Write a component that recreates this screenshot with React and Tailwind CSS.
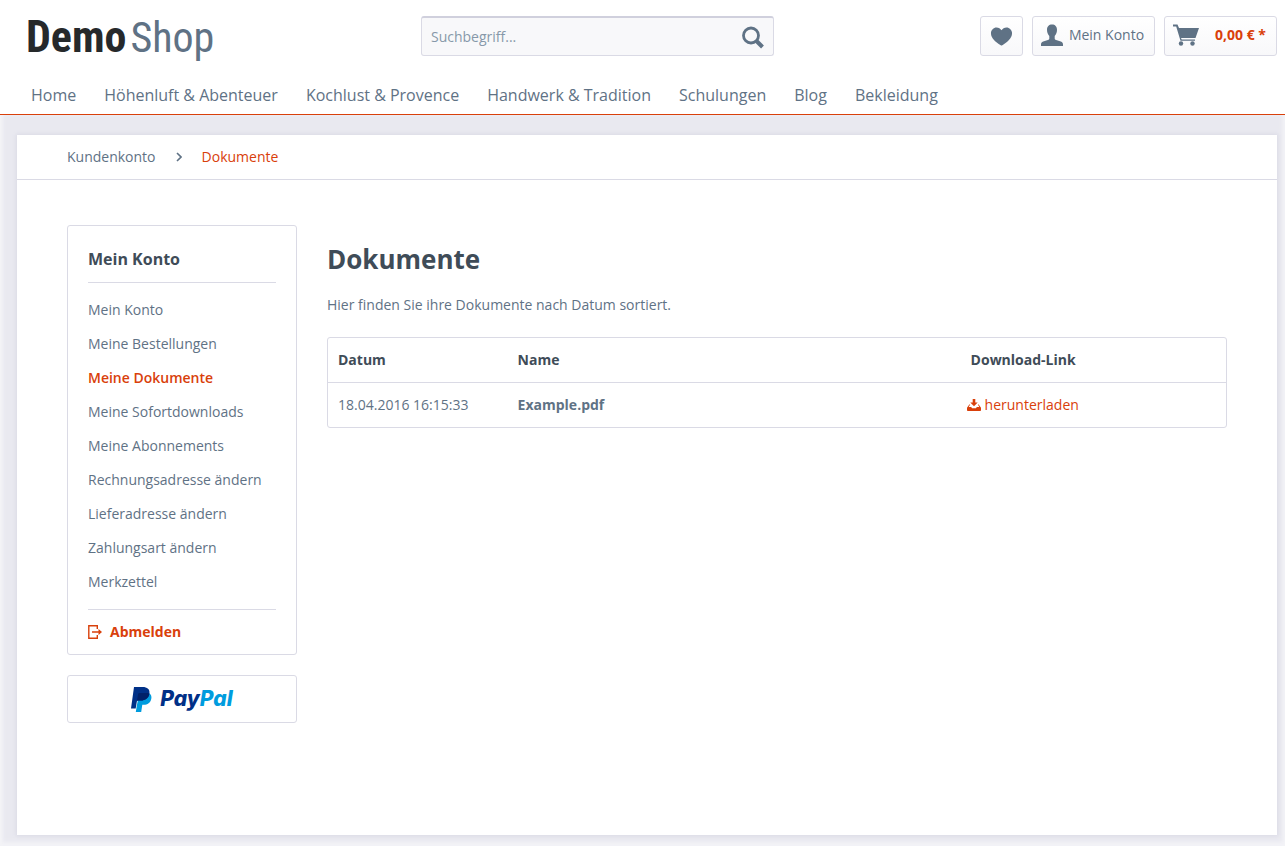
import { GoHeartFill } from "react-icons/go";

const navItems = ["Home", "Höhenluft & Abenteuer", "Kochlust & Provence", "Handwerk & Tradition", "Schulungen", "Blog", "Bekleidung"];

const accountLinks = [
  "Mein Konto",
  "Meine Bestellungen",
  "Meine Dokumente",
  "Meine Sofortdownloads",
  "Meine Abonnements",
  "Rechnungsadresse ändern",
  "Lieferadresse ändern",
  "Zahlungsart ändern",
  "Merkzettel",
];

const documents = [{ date: "18.04.2016 16:15:33", name: "Example.pdf" }];

function SearchIcon() {
  return (
    <svg viewBox="0 0 24 24" className="size-6" fill="none" stroke="#5f7285" aria-hidden="true">
      <circle cx="10" cy="10.500" r="7.500" strokeWidth="2.800" />
      <path d="M15.500 16 21.500 22" strokeWidth="4" />
    </svg>
  );
}

function UserIcon() {
  return (
    <svg viewBox="0 0 22 22" className="size-[22px]" fill="#5f7285" aria-hidden="true">
      <path d="M11 0.500c3.100 0 5 2 5 5.200c0 2.600-.9 4.900-2.300 6.300v2.400c0 .8.500 1.300 1.400 1.600l4.700 1.500c1.600.6 2.200 1.500 2.200 3V22H0v-1.500c0-1.500.6-2.400 2.200-3l4.700-1.500c.9-.3 1.400-.8 1.400-1.600V12C6.900 10.600 6 8.300 6 5.700C6 2.500 7.900.5 11 .5Z" />
    </svg>
  );
}

function CartIcon() {
  return (
    <svg viewBox="0 0 26 22" className="h-[22px] w-[26px]" fill="#5f7285" aria-hidden="true">
      <path d="M0 0.500h4.500l1.500 3.500H26l-3.500 10H8l.7 1.500H22v1.300H7.500L3.200 2.600H0Z" />
      <circle cx="8" cy="19.500" r="2.200" />
      <circle cx="19.500" cy="19.500" r="2.200" />
    </svg>
  );
}

function LogoutIcon() {
  return (
    <svg viewBox="0 0 14 14" className="size-3.5" fill="none" stroke="#d9400b" strokeWidth="1.400" aria-hidden="true">
      <path d="M9.300 4V.8H.8v12.400h8.500V10M4 7h8" />
      <path d="M10.500 4v6L14 7Z" fill="#d9400b" stroke="none" />
    </svg>
  );
}

function DownloadIcon() {
  return (
    <svg viewBox="0 0 14 12" className="h-3 w-3.5" fill="#d9400b" aria-hidden="true">
      <path d="M5.700 0h2.600v3.500h2.400L7 7.200 3.300 3.500h2.400Z" />
      <path d="M2.300 5.500 0 8.700v2.500c0 .5.300.8.800.8h12.400c.5 0 .8-.3.800-.8V8.700l-2.300-3.200h-.9L12.300 8H9.800L9 9.200H5L4.200 8H1.700L3.200 5.500Z" />
    </svg>
  );
}

function PayPalMark() {
  return (
    <svg viewBox="0 0 21 25" className="h-[25px] w-[21px]" aria-hidden="true">
      <path fill="#009cde" d="M18.500 6.500c1.700 1.200 2.300 3 1.800 5.300-.9 4.300-3.600 6-7.700 6h-1.300l-1.100 7.200H4.800L6 17.500l2-9Z" />
      <path fill="#003087" d="M3 0h8.500c4.800 0 7.600 2.200 6.900 6.500-.8 4.900-4.100 7-8.700 7H7.200c-.8 0-1.300.4-1.400 1.200L4.700 21.500H0Z" />
      <path fill="#012169" d="M18.400 6.500c-.8 4.900-4.100 7-8.700 7H7.200c-.8 0-1.300.4-1.400 1.200l1.300-7.500c.1-.8.600-1.200 1.300-1.200H14c1.700 0 3.200 0 4.400.5Z" />
    </svg>
  );
}

export default function App() {
  return (
    <div className="flex min-h-screen flex-col bg-[#e9e9f0] font-['Open_Sans',sans-serif] text-sm text-[#5f7285]">
      <header className="border-b border-[#d9400b] bg-white">
        <div className="flex items-start justify-between pt-4 pr-2 pl-[26px]">
          <a href="#" className="flex h-10 w-[395px] items-baseline gap-1 font-['Roboto_Condensed','Liberation_Sans_Narrow',Roboto,sans-serif] leading-[42px]">
            <span className="text-[44px] font-bold text-[#26292b]">Demo</span>
            <span className="text-[42px] text-[#5f7285]">Shop</span>
          </a>
          <form className="flex h-10 w-[353px] items-center rounded-[3px] border border-t-2 border-[#dadae5] border-t-[#d0d0dd] bg-[#f8f8fa]">
            <input type="search" aria-label="Suchbegriff" placeholder="Suchbegriff..." className="min-w-0 flex-1 bg-transparent px-[9px] outline-none placeholder:text-[#8798a9]" />
            <button type="button" aria-label="Suchen" className="px-2"><SearchIcon /></button>
          </form>
          <div className="flex flex-1 justify-end gap-[9px]">
            <button type="button" aria-label="Merkzettel" className="flex h-10 w-[43px] items-center justify-center rounded-[3px] border border-[#dadae5] bg-linear-to-b from-white to-[#f8f8fa]">
              <GoHeartFill className="size-[23px] text-[#5f7285]" />
            </button>
            <button type="button" className="flex h-10 items-center gap-1.5 rounded-[3px] border border-[#dadae5] bg-linear-to-b from-white to-[#f8f8fa] pr-2.5 pl-2 pb-0.5">
              <UserIcon />
              <span>Mein Konto</span>
            </button>
            <button type="button" className="flex h-10 items-center gap-4 rounded-[3px] border border-[#dadae5] bg-linear-to-b from-white to-[#f8f8fa] pr-2.5 pb-0.5 pl-2 font-bold text-[#d9400b]">
              <CartIcon />
              <span>0,00 € *</span>
            </button>
          </div>
        </div>
        <nav className="flex gap-7 pt-[27px] pb-[7px] pl-[31px] text-base leading-6">
          {navItems.map((item) => (
            <a key={item} href="#">{item}</a>
          ))}
        </nav>
      </header>

      <div className="flex flex-1 flex-col pt-5 pr-2 pb-[11px] pl-[17px] shadow-[inset_0_-4px_4px_#f3f3f7,inset_4px_0_4px_-2px_#f6f6f9,inset_-4px_0_4px_-2px_#f3f3f7]">
        <main className="flex-1 bg-white shadow-[0_0_4px_1px_#dadae5]">
          <nav aria-label="Brotkrumen" className="flex h-[45px] items-center gap-5 border-b border-[#dadae5] px-[50px]">
            <a href="#">Kundenkonto</a>
            <svg viewBox="0 0 6 10" className="h-2.5 w-1.5" fill="none" stroke="#5f7285" strokeWidth="1.600" aria-hidden="true">
              <path d="M1 1l4 4-4 4" />
            </svg>
            <a href="#" className="text-[#d9400b]">Dokumente</a>
          </nav>
          <div className="flex items-start gap-[30px] px-[50px] pt-[45px] pb-12">
            <aside className="flex w-[230px] flex-col gap-5">
              <div className="rounded-[3px] border border-[#dadae5] px-5 pt-5">
                <h2 className="border-b border-[#dadae5] pt-px pb-[11px] text-base leading-6 font-bold text-[#3f4c58]">Mein Konto</h2>
                <ul className="py-2.5">
                  {accountLinks.map((link) => (
                    <li key={link}>
                      <a href="#" className={link === "Meine Dokumente" ? "block leading-[34px] font-semibold text-[#d9400b]" : "block leading-[34px]"}>{link}</a>
                    </li>
                  ))}
                </ul>
                <a href="#" className="flex h-[45px] items-center gap-2 border-t border-[#dadae5] font-bold text-[#d9400b]">
                  <LogoutIcon />
                  <span>Abmelden</span>
                </a>
              </div>
              <a href="#" className="flex h-12 items-center justify-center gap-2 rounded-[3px] border border-[#dadae5]">
                <PayPalMark />
                <span className="font-['Inter',sans-serif] text-[21px] font-extrabold text-[#003087] italic">Pay<span className="text-[#009cde]">Pal</span></span>
              </a>
            </aside>
            <section className="min-w-0 flex-1">
              <h1 className="pt-4 text-[26px] leading-9 font-bold text-[#3f4c58]">Dokumente</h1>
              <p className="pt-4 leading-6">Hier finden Sie ihre Dokumente nach Datum sortiert.</p>
              <div className="mt-5 rounded-[3px] border border-[#dadae5]">
                <table className="w-full table-fixed border-separate border-spacing-0 text-left">
                  <thead>
                    <tr className="h-[45px] text-[#3f4c58]">
                      <th className="w-[20%] border-b border-[#dadae5] px-2.5 font-bold">Datum</th>
                      <th className="border-b border-[#dadae5] px-2.5 font-bold">Name</th>
                      <th className="w-[30%] border-b border-[#dadae5] px-3.5 font-bold">Download-Link</th>
                    </tr>
                  </thead>
                  <tbody>
                    {documents.map((doc) => (
                      <tr key={doc.name} className="h-11">
                        <td className="px-2.5">{doc.date}</td>
                        <td className="px-2.5 font-bold">{doc.name}</td>
                        <td className="px-2.5">
                          <a href="#" className="flex items-center gap-1 text-[#d9400b]">
                            <DownloadIcon />
                            <span>herunterladen</span>
                          </a>
                        </td>
                      </tr>
                    ))}
                  </tbody>
                </table>
              </div>
            </section>
          </div>
        </main>
      </div>
    </div>
  );
}
